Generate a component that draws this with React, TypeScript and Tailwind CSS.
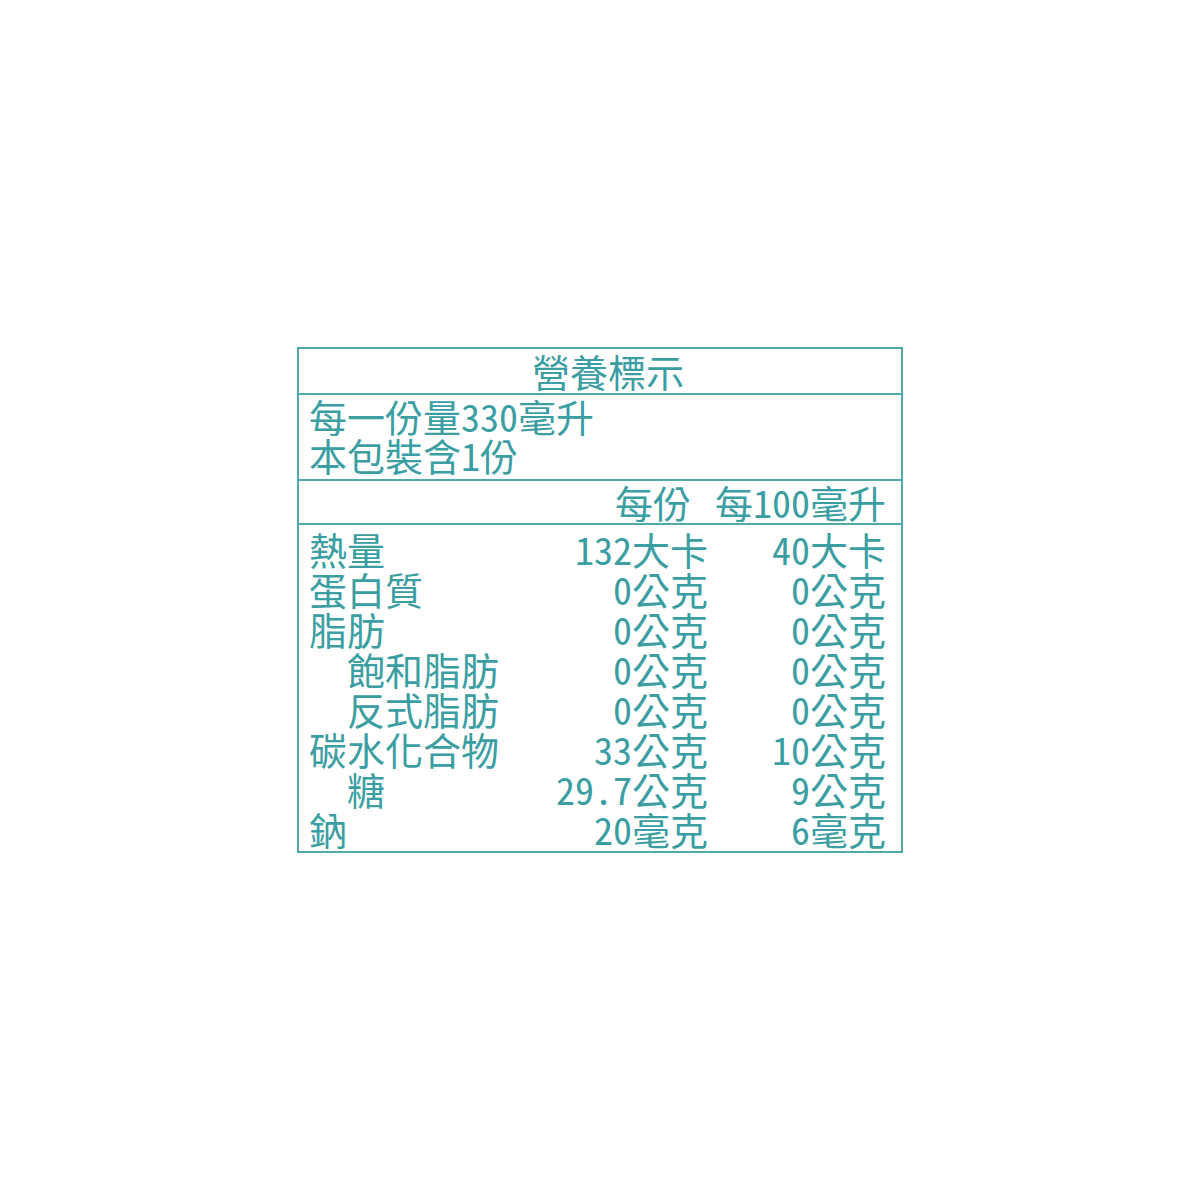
const rows: { label: string; indent?: boolean; per: string; per100: string }[] = [
  { label: "熱量", per: "132大卡", per100: "40大卡" },
  { label: "蛋白質", per: "0公克", per100: "0公克" },
  { label: "脂肪", per: "0公克", per100: "0公克" },
  { label: "飽和脂肪", indent: true, per: "0公克", per100: "0公克" },
  { label: "反式脂肪", indent: true, per: "0公克", per100: "0公克" },
  { label: "碳水化合物", per: "33公克", per100: "10公克" },
  { label: "糖", indent: true, per: "29.7公克", per100: "9公克" },
  { label: "鈉", per: "20毫克", per100: "6毫克" },
];

export default function App() {
  return (
    <div className="flex h-[1200px] w-full items-center justify-center bg-white">
      {/* nutrition label */}
      <div
        className="flex h-[506px] w-[606px] flex-col border-2 border-[#4fa9ad] text-[38px] text-[#3a9ea2]"
        style={{ fontFamily: '"Noto Sans CJK TC", "Noto Sans CJK JP", sans-serif', fontFeatureSettings: '"hwid" 1' }}
      >
        <div className="flex h-[46px] items-center justify-center border-b-2 border-[#4fa9ad] pl-[16px] leading-[40px]">
          營養標示
        </div>

        <div className="flex h-[86px] flex-col border-b-2 border-[#4fa9ad] pl-[10px] pt-[1px] leading-[39px]">
          <div>每一份量330毫升</div>
          <div>本包裝含1份</div>
        </div>

        <div className="flex h-[44px] items-center justify-end gap-[24px] border-b-2 border-[#4fa9ad] pr-[15px] leading-[40px]">
          <span>每份</span>
          <span>每100毫升</span>
        </div>

        <div className="grid flex-1 grid-cols-[230px_169px_178px] content-start pl-[10px] pt-[4px] leading-[40px]">
          {rows.map((r) => (
            <div key={r.label} className="contents">
              <div className={r.indent ? "pl-[38px]" : ""}>{r.label}</div>
              <div className="text-right">{r.per}</div>
              <div className="text-right">{r.per100}</div>
            </div>
          ))}
        </div>
      </div>
    </div>
  );
}
